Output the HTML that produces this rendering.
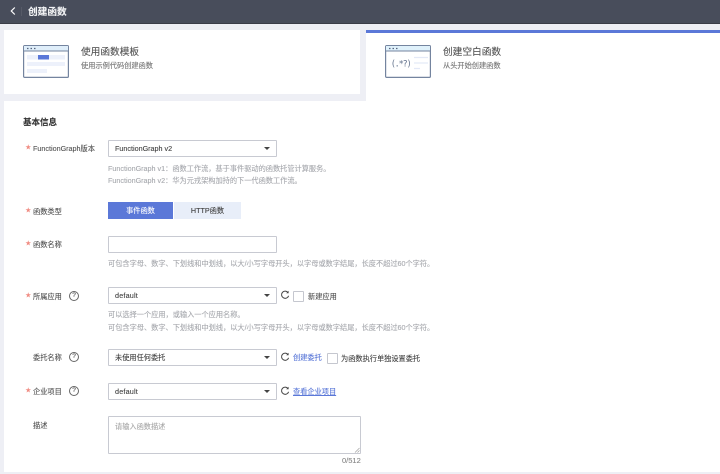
<!DOCTYPE html>
<html lang="zh"><head><meta charset="utf-8"><style>
html,body{margin:0;padding:0}
body{width:720px;height:474px;position:relative;overflow:hidden;background:#eeeff5;font-family:"Liberation Sans","Noto Sans CJK SC",sans-serif;font-size:7.2px;color:#555;-webkit-text-stroke:.12px}
.a{position:absolute;white-space:nowrap;line-height:12px}
.b{position:absolute;box-sizing:border-box;background:#fff;border:1px solid #c8cad2;border-radius:1px}
.sel{height:17px;width:169px;left:108px;font-size:7.2px;line-height:15px;padding-left:6px;color:#444}
.sel:after{content:"";position:absolute;right:6px;top:6px;border:3px solid transparent;border-top:3.5px solid #444;border-bottom:0}
.star{color:#f08a80;left:25.5px;font-size:5.5px}
.l{left:33px;color:#555}
.h{left:108px;color:#a8aaaf}
.q{position:absolute;left:69px;width:8px;height:8px;border:1px solid #666;border-radius:50%;font-size:6.500px;line-height:8px;text-align:center;color:#555}
.cb{position:absolute;width:9px;height:9px;border:1px solid #c5c7cf;border-radius:1px;background:#fff}
.lk{color:#5b78d8}
svg{position:absolute}
</style></head><body>
<div style="position:absolute;left:0;top:0;width:720px;height:23px;background:#484d5b;border-bottom:1px solid #3a3d47"></div>
<svg style="left:9px;top:6px" width="8" height="10" viewBox="0 0 8 10"><path d="M5.800 1.500L2.300 5L5.800 8.500" fill="none" stroke="#fff" stroke-width="1.200"/></svg>
<div style="position:absolute;left:21px;top:7px;width:1px;height:9px;background:#565a67"></div>
<div class="a" style="left:28px;top:7px;font-size:9.700px;font-weight:bold;color:#f2f3f5">创建函数</div>

<div style="position:absolute;left:4px;top:30px;width:356px;height:64px;background:#fff"></div>
<div style="position:absolute;left:366px;top:30px;width:354px;height:71px;background:#fff;border-top:3px solid #5b78d8;box-sizing:border-box"></div>
<div style="position:absolute;left:4px;top:101px;width:716px;height:371px;background:#fff"></div>

<svg style="left:23px;top:45px" width="46" height="33" viewBox="0 0 46 33">
<rect x=".6" y=".6" width="44.800" height="31.800" rx="1" fill="#fff" stroke="#74849f" stroke-width="1.200"/>
<rect x="1" y="1" width="44" height="5" fill="#dfeefa"/><path d="M1 6h44" stroke="#74849f"/>
<path d="M4 3.500h1.500M7.500 3.500h1.500M11 3.500h1.500" stroke="#56657f" stroke-width="1.200"/>
<rect x="4" y="10" width="38" height="4.500" fill="#edf1fb"/><rect x="15" y="10" width="11" height="4.500" fill="#5b78d8"/>
<rect x="4" y="17" width="38" height="4" fill="#edf1fb"/><rect x="4" y="24" width="20" height="4" fill="#edf1fb"/>
</svg>
<div class="a" style="left:81px;top:47px;font-size:9.700px;color:#555">使用函数模板</div>
<div class="a" style="left:81px;top:60px;color:#777">使用示例代码创建函数</div>

<svg style="left:385px;top:45px" width="46" height="33" viewBox="0 0 46 33">
<rect x=".6" y=".6" width="44.800" height="31.800" rx="1" fill="#fff" stroke="#74849f" stroke-width="1.200"/>
<rect x="1" y="1" width="44" height="5" fill="#dff1fb"/><path d="M1 6h44" stroke="#74849f"/>
<path d="M4 3.500h1.500M7.500 3.500h1.500M11 3.500h1.500" stroke="#56657f" stroke-width="1.200"/>
<path d="M29 12.500h14M29 18h14M29 23.500h6" stroke="#e3e9f7" stroke-width="1.200"/>
<text x="5.700" y="21.500" font-size="8.500" font-family="DejaVu Sans Mono" fill="#66758f" textLength="21" lengthAdjust="spacing" style="-webkit-text-stroke:0">(.*?)</text>
</svg>
<div class="a" style="left:443px;top:47px;font-size:9.700px;color:#555">创建空白函数</div>
<div class="a" style="left:443px;top:60px;color:#777">从头开始创建函数</div>

<div class="a" style="left:23px;top:116px;font-size:8.500px;font-weight:bold;color:#333">基本信息</div>

<div class="a star" style="top:142px">★</div><div class="a l" style="top:143px">FunctionGraph版本</div>
<div class="b sel" style="top:140px">FunctionGraph v2</div>
<div class="a h" style="top:163px">FunctionGraph v1：函数工作流，基于事件驱动的函数托管计算服务。</div>
<div class="a h" style="top:175px">FunctionGraph v2：华为元戎架构加持的下一代函数工作流。</div>

<div class="a star" style="top:205px">★</div><div class="a l" style="top:206px">函数类型</div>
<div style="position:absolute;left:108px;top:202px;width:65px;height:17px;background:#5b78d8;color:#fff;text-align:center;line-height:18px">事件函数</div>
<div style="position:absolute;left:174px;top:202px;width:67px;height:17px;background:#e8eef9;color:#444;text-align:center;line-height:18px">HTTP函数</div>

<div class="a star" style="top:238px">★</div><div class="a l" style="top:239px">函数名称</div>
<div class="b" style="left:108px;top:236px;width:169px;height:17px"></div>
<div class="a h" style="top:258px">可包含字母、数字、下划线和中划线，以大/小写字母开头，以字母或数字结尾，长度不超过60个字符。</div>

<div class="a star" style="top:290px">★</div><div class="a l" style="top:291px">所属应用</div><div class="q" style="top:291px">?</div>
<div class="b sel" style="top:287px;letter-spacing:.2px">default</div>
<svg style="left:280px;top:290px" width="10" height="10" viewBox="0 0 10 10"><path d="M8 2.500A3.600 3.600 0 1 0 8.600 5.800" fill="none" stroke="#444" stroke-width="1"/><path d="M8.600 .8V3.200H6.200z" fill="#444"/></svg>
<div class="cb" style="left:293px;top:291px"></div>
<div class="a" style="left:308px;top:291px">新建应用</div>
<div class="a h" style="top:309px">可以选择一个应用，或输入一个应用名称。</div>
<div class="a h" style="top:322px">可包含字母、数字、下划线和中划线，以大/小写字母开头，以字母或数字结尾，长度不超过60个字符。</div>

<div class="a l" style="top:352px">委托名称</div><div class="q" style="top:352px">?</div>
<div class="b sel" style="top:349px">未使用任何委托</div>
<svg style="left:280px;top:352px" width="10" height="10" viewBox="0 0 10 10"><path d="M8 2.500A3.600 3.600 0 1 0 8.600 5.800" fill="none" stroke="#444" stroke-width="1"/><path d="M8.600 .8V3.200H6.200z" fill="#444"/></svg>
<div class="a lk" style="left:293px;top:352px">创建委托</div>
<div class="cb" style="left:327px;top:353px"></div>
<div class="a" style="left:341px;top:353px;color:#444">为函数执行单独设置委托</div>

<div class="a star" style="top:385px">★</div><div class="a l" style="top:386px">企业项目</div><div class="q" style="top:386px">?</div>
<div class="b sel" style="top:383px;letter-spacing:.2px">default</div>
<svg style="left:280px;top:386px" width="10" height="10" viewBox="0 0 10 10"><path d="M8 2.500A3.600 3.600 0 1 0 8.600 5.800" fill="none" stroke="#444" stroke-width="1"/><path d="M8.600 .8V3.200H6.200z" fill="#444"/></svg>
<div class="a lk" style="left:293px;top:386px;text-decoration:underline">查看企业项目</div>

<div class="a" style="left:33px;top:420px">描述</div>
<div class="b" style="left:108px;top:416px;width:253px;height:38px;color:#aaa;padding:4px 6px;line-height:12px">请输入函数描述
<svg style="right:0;bottom:0" width="6" height="6" viewBox="0 0 6 6"><path d="M1 5.500L5.500 1M3.500 5.500L5.500 3.500" stroke="#999" stroke-width=".6"/></svg></div>
<div class="a" style="left:342px;top:455px;color:#888;font-size:7.500px">0/512</div>
</body></html>
